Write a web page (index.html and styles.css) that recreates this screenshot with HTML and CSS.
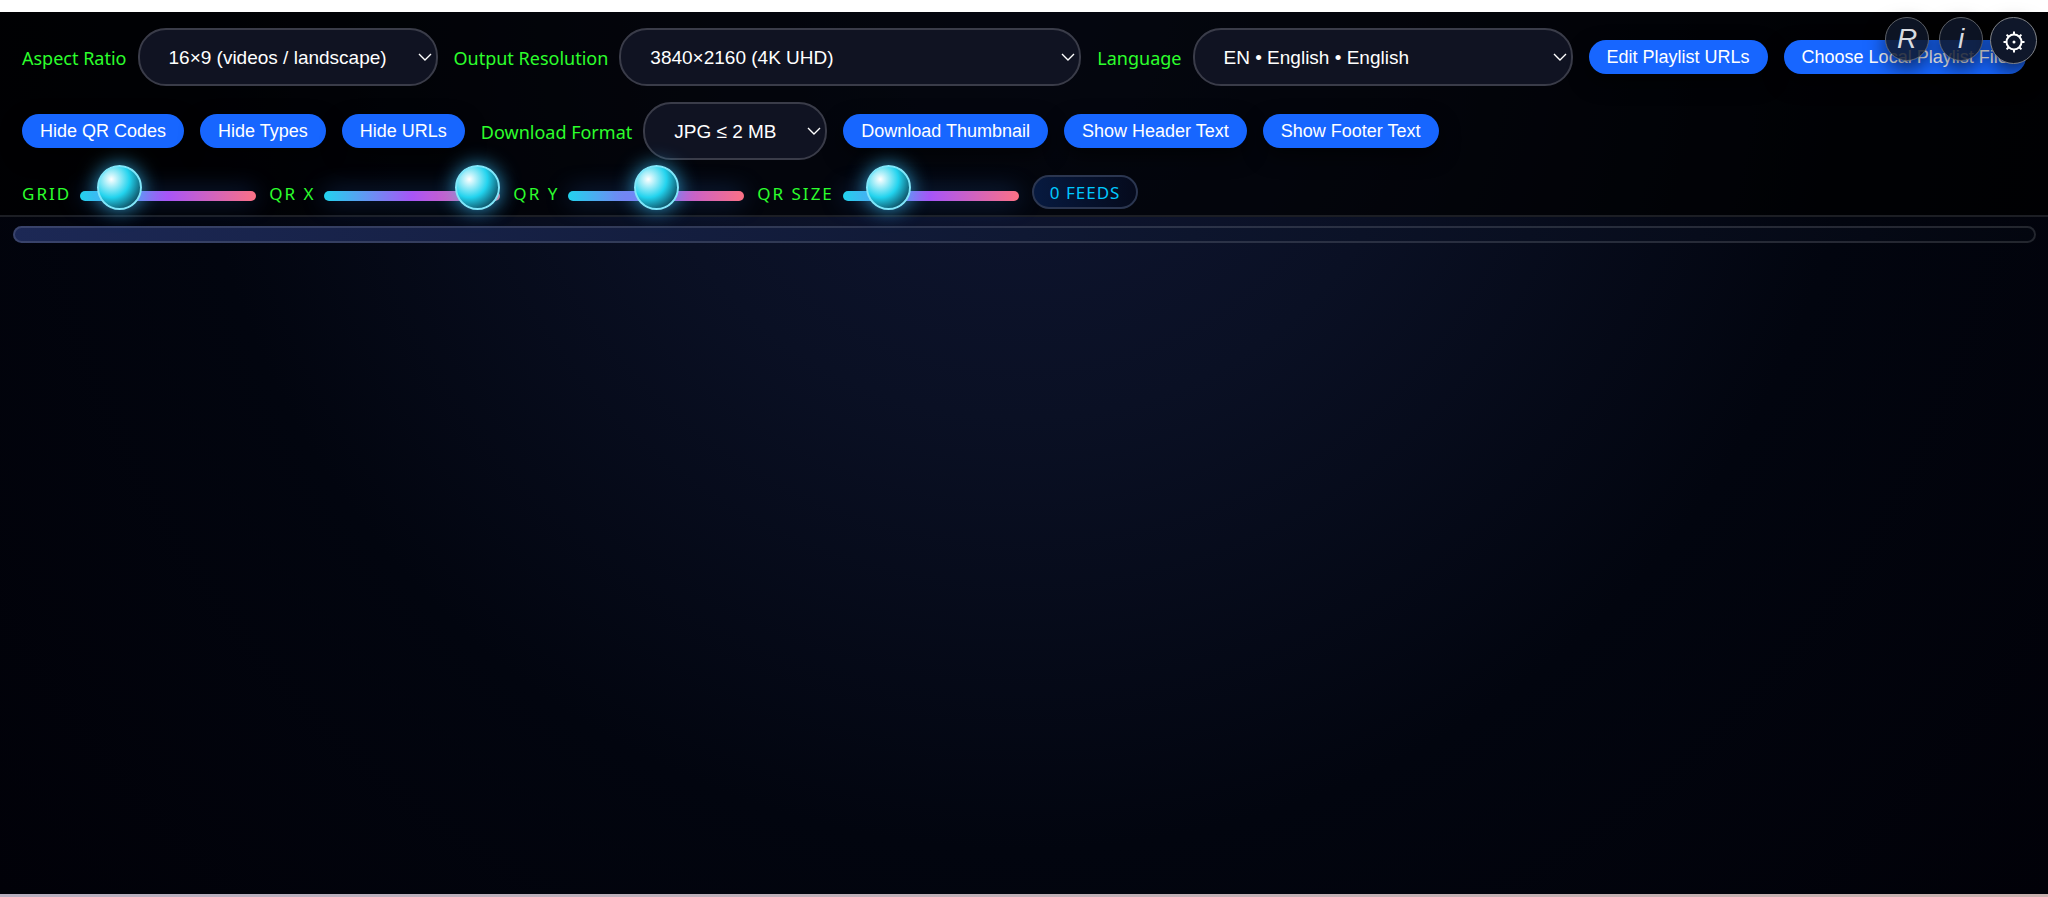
FILE: index.html
```html
<!DOCTYPE html>
<html lang="en">
<head>
  <meta charset="UTF-8">
  <meta name="viewport" content="width=device-width, initial-scale=1.0">
  <title>Playlist Thumbnails</title>
  <link rel="stylesheet" href="styles.css">
</head>
<body>
  <div class="app">
    <header class="toolbar">
      <div class="row">
        <div class="field">
          <label for="aspect">Aspect Ratio</label>
          <select id="aspect" class="w-aspect">
            <option>16×9 (videos / landscape)</option>
          </select>
        </div>
        <div class="field">
          <label for="resolution">Output Resolution</label>
          <select id="resolution" class="w-resolution">
            <option>3840×2160 (4K UHD)</option>
          </select>
        </div>
        <div class="field">
          <label for="language">Language</label>
          <select id="language" class="w-language">
            <option>EN • English • English</option>
          </select>
        </div>
        <button class="btn" type="button">Edit Playlist URLs</button>
        <button class="btn" type="button">Choose Local Playlist File</button>
        <button class="btn" type="button">Hide QR Codes</button>
        <button class="btn" type="button">Hide Types</button>
        <button class="btn" type="button">Hide URLs</button>
        <div class="field">
          <label for="format">Download Format</label>
          <select id="format" class="w-format">
            <option>JPG ≤ 2 MB</option>
          </select>
        </div>
        <button class="btn" type="button">Download Thumbnail</button>
        <button class="btn" type="button">Show Header Text</button>
        <button class="btn" type="button">Show Footer Text</button>
      </div>

      <div class="sliders">
        <label for="grid">GRID</label>
        <input id="grid" type="range" min="0" max="100" value="13">
        <label for="qr-x">QR X</label>
        <input id="qr-x" type="range" min="0" max="100" value="100">
        <label for="qr-y">QR Y</label>
        <input id="qr-y" type="range" min="0" max="100" value="50">
        <label for="qr-size">QR SIZE</label>
        <input id="qr-size" type="range" min="0" max="100" value="18">
        <span class="feeds">0 FEEDS</span>
      </div>
    </header>

    <div class="corner">
      <button class="round" type="button" aria-label="Reset">R</button>
      <button class="round" type="button" aria-label="Info">i</button>
      <button class="round gear" type="button" aria-label="Settings">
        <svg width="22" height="22" viewBox="0 0 22 22" fill="none" stroke="currentColor" stroke-width="2">
          <circle cx="11" cy="11" r="7.5"/>
          <circle cx="11" cy="11" r="1.5" fill="currentColor" stroke="none"/>
          <path d="M11 3.5V.5M11 18.5v3M3.5 11H.5M18.5 11h3M5.7 5.7 3.6 3.6M16.3 5.7l2.1-2.1M5.7 16.3l-2.1 2.1M16.3 16.3l2.1 2.1"/>
        </svg>
      </button>
    </div>

    <div class="progress"></div>
  </div>
  <div class="strip"></div>
</body>
</html>
```
FILE: styles.css
```css
* {
  box-sizing: border-box;
}
body {
  margin: 0;
  min-height: 100vh;
  display: flex;
  flex-direction: column;
  background: #fff;
  font-family: "Noto Sans", sans-serif;
  font-size: 18px;
  color: #2cff2c;
}
.app {
  position: relative;
  flex: 1;
  margin-top: 12px;
  background: radial-gradient(circle at top, #101735 0%, #0a1024 30%, #02050f 62%, #010108 100%);
}
.strip {
  height: 3px;
  background: linear-gradient(90deg, #b9afc0, #c9b0ae);
}
.toolbar {
  padding: 16px 16px 6px 22px;
  background: rgba(0, 0, 0, 0.7);
  border-bottom: 2px solid #1c1e24;
}
.row {
  display: flex;
  flex-wrap: wrap;
  align-items: center;
  gap: 16px;
}
.field {
  display: flex;
  align-items: center;
  gap: 11px;
}
.field label {
  padding-top: 2px;
}
select {
  appearance: none;
  height: 58px;
  padding: 0 40px 0 29px;
  border: 2px solid #3a3c49;
  border-radius: 28px;
  background: #101322 url("data:image/svg+xml,%3Csvg xmlns='http://www.w3.org/2000/svg' width='14' height='9' fill='none' stroke='white' stroke-width='1.4'%3E%3Cpath d='M1 1l6 6 6-6'/%3E%3C/svg%3E") no-repeat right 4px center;
  color: #fff;
  font: 19px "Liberation Sans", sans-serif;
}
.w-aspect {
  width: 300px;
}
.w-resolution {
  width: 462px;
}
.w-language {
  width: 380px;
}
.w-format {
  width: 184px;
}
.btn {
  height: 34px;
  padding: 0 18px;
  border: 0;
  border-radius: 17px;
  background: #1766ff;
  box-shadow: 0 8px 20px rgba(0, 0, 0, 0.6);
  color: #fff;
  font: 18px "Liberation Sans", sans-serif;
}
.sliders {
  display: flex;
  align-items: center;
  gap: 13px;
  margin-top: 15px;
  font-size: 17px;
  letter-spacing: 2px;
}
.sliders label {
  margin: 3px -4px 0 0;
}
input[type="range"] {
  appearance: none;
  width: 176px;
  height: 10px;
  margin: 11px 0 4px;
  border-radius: 5px;
  background: linear-gradient(90deg, #22d3ee, #a855f7 50%, #fb7185);
  box-shadow: 0 0 24px rgba(56, 130, 246, 0.35);
}
input[type="range"]::-webkit-slider-runnable-track {
  height: 10px;
}
input[type="range"]::-webkit-slider-thumb {
  appearance: none;
  width: 45px;
  height: 45px;
  margin-top: -26px;
  border: 2px solid #7fe6fa;
  border-radius: 50%;
  background: radial-gradient(circle at 30% 30%, #fff 0, #22d3ee 45%, #020617 100%);
  box-shadow: 0 0 20px rgba(56, 189, 248, 0.8);
}
.feeds {
  height: 34px;
  padding: 0 16px;
  border: 2px solid #2b3650;
  border-radius: 17px;
  background: linear-gradient(90deg, #071a40, #050a1c);
  color: #00c8ff;
  letter-spacing: 1px;
  line-height: 32px;
}
.corner {
  position: absolute;
  top: 5px;
  right: 11px;
  display: flex;
  gap: 10px;
}
.round {
  width: 44px;
  height: 44px;
  padding: 0;
  border: 1px solid #5b5f66;
  border-radius: 50%;
  background: rgba(15, 23, 42, 0.85);
  box-shadow: 0 8px 20px rgba(0, 0, 0, 0.6);
  color: #d8dbe0;
  font: italic 28px/1 "Liberation Sans", sans-serif;
}
.gear {
  display: flex;
  align-items: center;
  justify-content: center;
  width: 47px;
  height: 47px;
  margin-left: -3px;
  padding-top: 3px;
  border-color: #808389;
  background: #0f172a;
  color: #fff;
}
.progress {
  height: 17px;
  margin: 9px 12px 9px 13px;
  border: 2px solid rgba(255, 255, 255, 0.13);
  border-radius: 9px;
  background: linear-gradient(90deg, #1c2855, #0f1833 50%, #03060f) border-box;
}
```
